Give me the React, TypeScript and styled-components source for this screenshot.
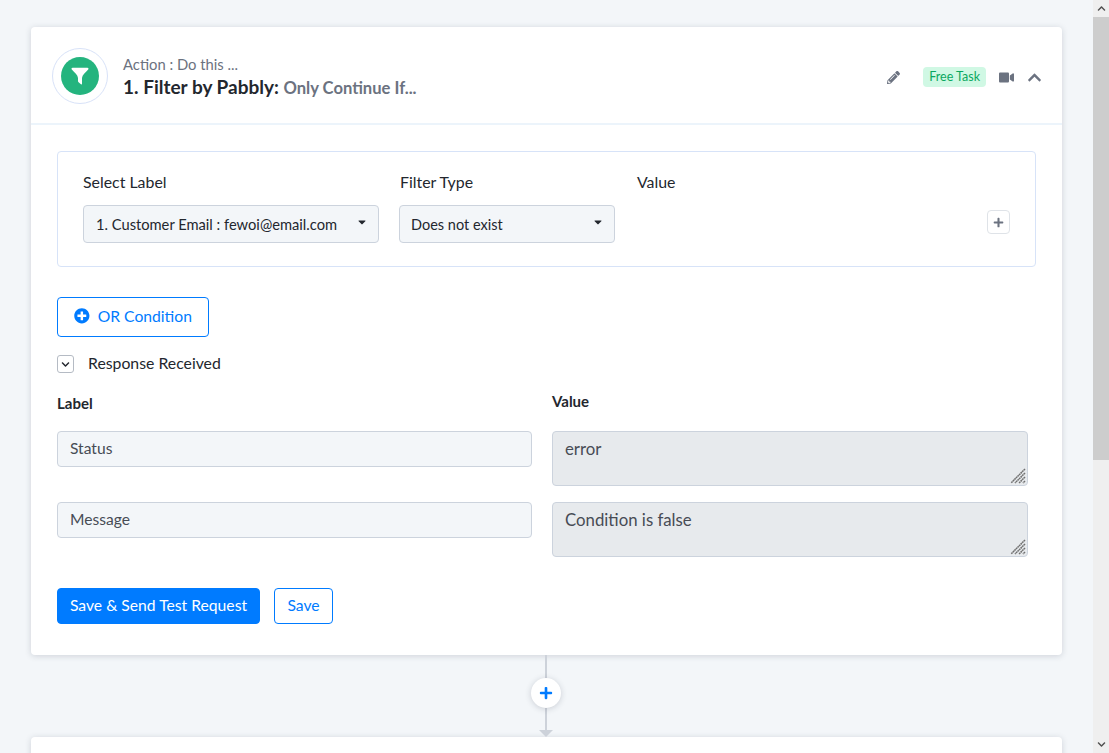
import React from 'react';
import styled, { createGlobalStyle } from 'styled-components';
import { FaPencilAlt, FaVideo, FaChevronUp, FaChevronDown, FaPlus, FaPlusCircle, FaCaretDown } from 'react-icons/fa';

const Global = createGlobalStyle`
  html, body { margin: 0; height: 100%; overflow: hidden; }
  body { background: #f3f6f9; font-family: "Lato", "Noto Sans", sans-serif; color: #23272e; }
  * { box-sizing: border-box; }
`;

const Page = styled.div`
  display: flex;
  width: 1109px;
  height: 753px;
  overflow: hidden;
`;

const Main = styled.main`
  width: 1093px;
  flex: none;
  padding: 27px 31px 0;
  overflow: hidden;
`;

const Scrollbar = styled.div`
  width: 16px;
  flex: none;
  background: #efefef;
  display: flex;
  flex-direction: column;
  align-items: center;
  color: #505050;
`;

const ScrollArrow = styled.div`
  height: 17px;
  display: flex;
  align-items: center;
  justify-content: center;
  font-size: 9px;
`;

const ScrollThumb = styled.div`
  width: 100%;
  height: 443px;
  background: #cdcdcd;
`;

const ScrollGap = styled.div`
  flex: 1;
`;

const Card = styled.section`
  background: #fff;
  border-radius: 4px;
  box-shadow: 0 1px 6px rgba(40, 50, 70, 0.18);
`;

const Header = styled.header`
  height: 98px;
  display: flex;
  align-items: center;
  padding: 2px 20px 0 21px;
  border-bottom: 2px solid #ecf4fb;
`;

const IconRing = styled.div`
  width: 56px;
  height: 56px;
  border-radius: 50%;
  border: 1px solid #d8e2f8;
  display: flex;
  align-items: center;
  justify-content: center;
  margin-right: 15px;
`;

const IconDisc = styled.div`
  width: 38px;
  height: 38px;
  border-radius: 50%;
  background: #24b47e;
  color: #fff;
  display: flex;
  align-items: center;
  justify-content: center;
`;

const Titles = styled.div`
  flex: 1;
  padding-top: 3px;
`;

const Overline = styled.div`
  font-size: 14.8px;
  line-height: 20px;
  color: #6b7280;
`;

const Title = styled.div`
  font-size: 19px;
  line-height: 26px;
  font-weight: 700;
  color: #23272e;
`;

const TitleNote = styled.span`
  font-size: 16.6px;
  color: #6b7280;
`;

const Actions = styled.div`
  display: flex;
  align-items: center;
  color: #6b7280;
  margin-top: 2px;
`;

const EditIcon = styled.span`
  display: flex;
  font-size: 13px;
  margin-right: 23px;
`;

const Badge = styled.span`
  height: 20px;
  padding: 0 6px;
  border-radius: 4px;
  background: #d0f8e4;
  color: #0aa85f;
  font-size: 12.5px;
  line-height: 20px;
  margin-right: 13px;
`;

const VideoIcon = styled.span`
  display: flex;
  font-size: 15px;
  margin-right: 13px;
`;

const ChevronIcon = styled.span`
  display: flex;
  font-size: 15px;
  stroke-width: 20;
`;

const Body = styled.div`
  padding: 26px 26px 31px;
`;

const FilterBox = styled.div`
  height: 116px;
  border: 1px solid #d7e3f8;
  border-radius: 4px;
  padding: 19px 25px 0;
  display: grid;
  grid-template-columns: 296px 216px 1fr 23px;
  grid-template-rows: 22px 38px;
  column-gap: 20px;
  row-gap: 12px;
  position: relative;
`;

const FieldLabel = styled.div<{ $nudge?: number }>`
  font-size: 15.9px;
  line-height: 22px;
  color: #23272e;
  padding-left: ${p => p.$nudge ?? 0}px;
`;

const Select = styled.div`
  height: 38px;
  background: #f3f6f9;
  border: 1px solid #ccd3dd;
  border-radius: 4px;
  display: flex;
  align-items: center;
  justify-content: space-between;
  padding: 0 10px 0 12px;
  font-size: 14.7px;
  color: #23272e;
`;

const SelectSmall = styled(Select)`
  padding-left: 11px;
  font-size: 14.5px;
`;

const Caret = styled.span`
  display: flex;
  font-size: 12px;
  margin-top: -4px;
`;

const AddRow = styled.button`
  grid-column: 4;
  width: 23px;
  height: 24px;
  margin-top: 5px;
  padding: 0;
  background: #fff;
  border: 1px solid #dfe3e8;
  border-radius: 4px;
  color: #6b7280;
  font-size: 11px;
  display: flex;
  align-items: center;
  justify-content: center;
`;

const OrButton = styled.button`
  display: flex;
  align-items: center;
  gap: 8px;
  width: 152px;
  height: 40px;
  margin-top: 30px;
  padding: 0 0 2px 16px;
  background: #fff;
  border: 1px solid #007bff;
  border-radius: 4px;
  color: #007bff;
  font: inherit;
  font-size: 15.7px;
`;

const ResponseRow = styled.div`
  display: flex;
  align-items: center;
  gap: 14px;
  margin-top: 18px;
  height: 18px;
  font-size: 15.8px;
  line-height: 16px;
`;

const ResponseText = styled.span`
  margin-top: -2px;
`;

const Toggle = styled.span`
  width: 17px;
  height: 18px;
  border: 1px solid #b5bbc4;
  border-radius: 3px;
  display: flex;
  align-items: center;
  justify-content: center;
  font-size: 9px;
`;

const ResponseGrid = styled.div`
  display: grid;
  grid-template-columns: 475px 476px;
  column-gap: 20px;
  margin-top: 17px;
`;

const ColumnHead = styled.div<{ $drop?: number }>`
  font-size: 15px;
  font-weight: 700;
  line-height: 22px;
  height: 41px;
  padding-top: ${p => p.$drop ?? 0}px;
`;

const Column = styled.div`
  display: flex;
  flex-direction: column;
`;

const ReadInput = styled.div`
  height: 36px;
  margin-bottom: 35px;
  padding: 0 12px;
  background: #f3f6f9;
  border: 1px solid #ccd3dd;
  border-radius: 4px;
  font-size: 15.6px;
  line-height: 33px;
  color: #474c55;
`;

const ReadArea = styled.div`
  height: 55px;
  margin-bottom: 16px;
  padding: 6px 12px;
  background: #e7eaed;
  border: 1px solid #ccd3dd;
  border-radius: 4px;
  font-size: 16.8px;
  line-height: 22px;
  color: #474c55;
  position: relative;
`;

const Grip = styled.svg`
  position: absolute;
  right: 1px;
  bottom: 1px;
  width: 16px;
  height: 16px;
`;

const Buttons = styled.div`
  display: flex;
  gap: 14px;
  margin-top: 15px;
`;

const Button = styled.button<{ $solid?: boolean }>`
  height: 36px;
  padding: 0 0 2px;
  width: ${p => (p.$solid ? '203px' : '59px')};
  border: 1px solid #007bff;
  border-radius: 4px;
  background: ${p => (p.$solid ? '#007bff' : '#fff')};
  color: ${p => (p.$solid ? '#fff' : '#007bff')};
  font: inherit;
  font-size: 15.7px;
`;

const Connector = styled.div`
  height: 82px;
  padding-right: 1px;
  display: flex;
  flex-direction: column;
  align-items: center;
  position: relative;
`;

const ConnectorLine = styled.div`
  width: 2px;
  flex: 1;
  background: #cdd2da;
`;

const ConnectorArrow = styled.div`
  width: 0;
  height: 0;
  border-left: 7px solid transparent;
  border-right: 7px solid transparent;
  border-top: 7px solid #cdd2da;
`;

const AddStep = styled.button`
  position: absolute;
  top: 23px;
  left: calc(50% - 16px);
  width: 30px;
  height: 30px;
  padding: 0;
  border: 0;
  border-radius: 50%;
  background: #fff;
  box-shadow: 0 1px 6px rgba(40, 50, 70, 0.2);
  color: #007bff;
  font-size: 14px;
  display: flex;
  align-items: center;
  justify-content: center;
`;

const NextCard = styled(Card)`
  height: 120px;
`;

const FunnelIcon = () => (
  <svg width="18" height="18" viewBox="0 0 18 18">
    <path d="M1.6.8h14.8c1 0 1.4 1 .8 1.7C14.4 5.4 11.2 8 11 11v5.8c0 .6-.6.9-1.1.5l-2.3-2c-.4-.3-.6-.7-.6-1.2V11C6.800 8 3.600 5.400.8 2.500.2 1.800.6.800 1.600.8z" fill="#fff" />
  </svg>
);

const ResizeGrip = () => (
  <Grip viewBox="0 0 16 16">
    <path d="M15 1 1 15M15 5 5 15M15 9 9 15M15 13 13 15" stroke="#707070" strokeWidth="1.5" strokeDasharray="1.8 .4" fill="none" />
  </Grip>
);

const rows = [
  { label: 'Status', value: 'error' },
  { label: 'Message', value: 'Condition is false' },
];

export default function App() {
  return (
    <Page>
      <Global />
      <Main>
        <Card>
          <Header>
            <IconRing>
              <IconDisc><FunnelIcon /></IconDisc>
            </IconRing>
            <Titles>
              <Overline>Action : Do this ...</Overline>
              <Title>1. Filter by Pabbly: <TitleNote>Only Continue If...</TitleNote></Title>
            </Titles>
            <Actions>
              <EditIcon><FaPencilAlt /></EditIcon>
              <Badge>Free Task</Badge>
              <VideoIcon><FaVideo /></VideoIcon>
              <ChevronIcon><FaChevronUp /></ChevronIcon>
            </Actions>
          </Header>
          <Body>
            <FilterBox>
              <FieldLabel>Select Label</FieldLabel>
              <FieldLabel $nudge={1}>Filter Type</FieldLabel>
              <FieldLabel $nudge={2}>Value</FieldLabel>
              <span />
              <Select>1. Customer Email : fewoi@email.com<Caret><FaCaretDown /></Caret></Select>
              <SelectSmall>Does not exist<Caret><FaCaretDown /></Caret></SelectSmall>
              <span />
              <AddRow><FaPlus /></AddRow>
            </FilterBox>
            <OrButton><FaPlusCircle />OR Condition</OrButton>
            <ResponseRow>
              <Toggle><FaChevronDown /></Toggle>
              <ResponseText>Response Received</ResponseText>
            </ResponseRow>
            <ResponseGrid>
              <Column>
                <ColumnHead $drop={2}>Label</ColumnHead>
                {rows.map(r => <ReadInput key={r.label}>{r.label}</ReadInput>)}
              </Column>
              <Column>
                <ColumnHead>Value</ColumnHead>
                {rows.map(r => (
                  <ReadArea key={r.label}>{r.value}<ResizeGrip /></ReadArea>
                ))}
              </Column>
            </ResponseGrid>
            <Buttons>
              <Button $solid>Save &amp; Send Test Request</Button>
              <Button>Save</Button>
            </Buttons>
          </Body>
        </Card>
        <Connector>
          <ConnectorLine />
          <ConnectorArrow />
          <AddStep><FaPlus /></AddStep>
        </Connector>
        <NextCard />
      </Main>
      <Scrollbar>
        <ScrollArrow><FaChevronUp /></ScrollArrow>
        <ScrollThumb />
        <ScrollGap />
        <ScrollArrow><FaChevronDown /></ScrollArrow>
      </Scrollbar>
    </Page>
  );
}
